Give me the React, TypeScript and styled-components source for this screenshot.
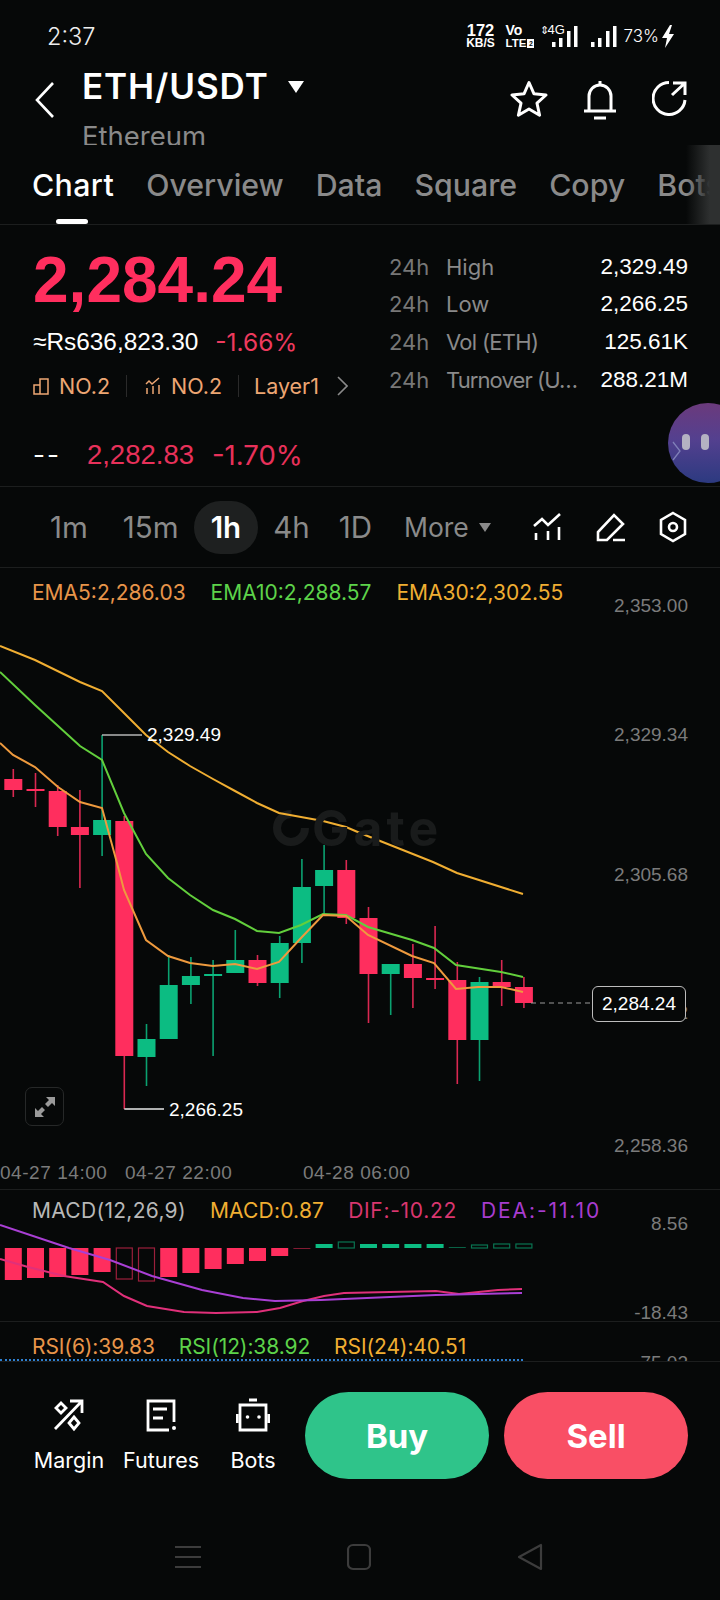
import React from "react";
import styled, { createGlobalStyle } from "styled-components";

const RED = "#ff2e5e";
const GREEN = "#0cbc82";
const EMA5 = "#e8954a";
const EMA10 = "#5dd34a";
const EMA30 = "#f0ae32";

const GlobalStyle = createGlobalStyle`
  html, body {
    margin: 0;
    padding: 0;
    background: #060808;
  }
  * {
    box-sizing: border-box;
  }
`;

// x position of candle number i, shared by price and MACD panes
const slot = (i: number) => 13.3 + 22.2 * i;

// [body top, body bottom, wick top, wick bottom, up]
const candles: [number, number, number, number, boolean][] = [
  [779, 790, 769, 797, false],
  [789, 791, 773, 807, false],
  [791, 827, 785, 836, false],
  [827, 835, 790, 888, false],
  [820, 835, 735, 856, true],
  [821, 1056, 816, 1109, false],
  [1039, 1057, 1024, 1086, true],
  [985, 1039, 955, 1039, true],
  [976, 985, 957, 1004, true],
  [974, 976, 960, 1056, true],
  [960, 973, 930, 973, true],
  [960, 983, 955, 986, false],
  [943, 983, 936, 998, true],
  [887, 943, 859, 963, true],
  [870, 886, 845, 915, true],
  [870, 918, 860, 924, false],
  [918, 974, 907, 1023, false],
  [964, 974, 964, 1015, true],
  [964, 978, 944, 1008, false],
  [978, 980, 926, 989, false],
  [980, 1040, 962, 1084, false],
  [982, 1040, 977, 1081, true],
  [982, 987, 960, 1006, false],
  [987, 1003, 977, 1008, false],
];

const ema30Line =
  "0,646 35,660 80,682 102,691 124,713 146,735 168,752 190,766 213,779 235,791 257,803 279,813 301,817 323,821 346,827 360,833 433,862 457,873 523,894";
const ema10Line =
  "0,672 35,705 80,746 102,760 124,813 146,854 168,878 190,895 213,910 235,919 257,931 279,933 301,925 323,914 346,915 368,927 412,940 434,948 456,965 501,972 523,977";
const ema5Line =
  "0,743 13,755 35,767 58,787 80,802 102,808 117,863 124,890 146,940 168,956 190,963 213,966 235,964 257,969 279,962 301,938 323,915 346,916 368,935 412,956 434,963 456,989 478,987 501,987 523,992";
const deaLine =
  "0,1225 69,1248 110,1260 152,1276 202,1290 243,1298 275,1301 321,1300 367,1298 436,1295 522,1293";
const difLine =
  "0,1259 28,1267 64,1276 103,1282 124,1296 147,1306 184,1312 216,1313 257,1312 280,1308 303,1301 324,1296 344,1293 390,1292 436,1291 459,1294 498,1290 522,1289";

// [top, bottom, hollow]
const macdBars: [number, number, boolean][] = [
  [1248, 1280, false],
  [1248, 1278, false],
  [1248, 1277, false],
  [1248, 1275, false],
  [1248, 1272, false],
  [1248, 1279, true],
  [1248, 1281, true],
  [1248, 1277, false],
  [1248, 1273, false],
  [1248, 1269, false],
  [1248, 1264, false],
  [1248, 1261, false],
  [1248, 1256, false],
  [1248, 1249, false],
  [1244, 1248, false],
  [1242, 1248, true],
  [1244, 1248, false],
  [1244, 1248, false],
  [1244, 1248, false],
  [1244, 1248, false],
  [1247, 1248, false],
  [1245, 1248, true],
  [1244, 1248, true],
  [1244, 1248, true],
];

const stats = [
  { label: "High", value: "2,329.49", spacing: 0 },
  { label: "Low", value: "2,266.25", spacing: 0 },
  { label: "Vol (ETH)", value: "125.61K", spacing: -0.7 },
  { label: "Turnover (U…", value: "288.21M", spacing: -0.9 },
];

const Signal: React.FC = () => (
  <svg width="26" height="21" viewBox="0 0 26 21" fill="#fff">
    <rect x="0" y="16" width="3.500" height="5" />
    <rect x="7" y="12" width="3.500" height="9" />
    <rect x="15" y="5" width="3.500" height="16" />
    <rect x="22" y="0" width="3.500" height="21" />
  </svg>
);

const App: React.FC = () => {
  return (
    <Page>
      <GlobalStyle />
      <StatusBar>
        <Clock>2:37</Clock>
        <StatusIcons>
          <Speed>
            <b>172</b>
            <span>KB/S</span>
          </Speed>
          <Volte>
            <b>Vo</b>
            <span>
              LTE<i>2</i>
            </span>
          </Volte>
          <NetType>
            <small>⇕</small>
            <em>4G</em>
            <Signal />
          </NetType>
          <Signal />
          <Battery>73%</Battery>
          <svg width="14" height="23" viewBox="0 0 14 23" fill="#fff">
            <path d="M9 0 1 13h5l-2 10 9-14H8l3-9z" />
          </svg>
        </StatusIcons>
      </StatusBar>

      <Header>
        <BackIcon width="22" height="36" viewBox="0 0 22 36" fill="none" stroke="#fff" strokeWidth="2.600">
          <path d="M19 1 3 18l16 17" />
        </BackIcon>
        <TitleBlock>
          <TitleRow>
            <Pair>ETH/USDT</Pair>
            <Caret />
          </TitleRow>
          <CoinName>Ethereum</CoinName>
        </TitleBlock>
        <HeaderActions>
          <svg width="38" height="38" viewBox="0 0 38 38" fill="none" stroke="#fff" strokeWidth="3" strokeLinejoin="round">
            <path d="M19 2.500l5 11.300 12 1.200-9 8.200 2.600 12L19 29l-10.600 6.200 2.600-12-9-8.200 12-1.200z" />
          </svg>
          <svg width="34" height="40" viewBox="0 0 34 40" fill="none" stroke="#fff" strokeWidth="3">
            <path d="M6 31V16a11 11 0 0 1 22 0v15" />
            <path d="M1 31h32M11 38h12" />
            <path d="M17 1v4" />
          </svg>
          <svg width="36" height="36" viewBox="0 0 36 36" fill="none" stroke="#fff" strokeWidth="3">
            <path d="M17 2.500A16 16 0 1 0 33 20" />
            <path d="M20 15 33 3M21 3h12v12" />
          </svg>
        </HeaderActions>
      </Header>

      <Tabs>
        <Tab $active>Chart</Tab>
        <Tab>Overview</Tab>
        <Tab>Data</Tab>
        <Tab>Square</Tab>
        <Tab>Copy</Tab>
        <Tab>Bots</Tab>
        <TabsFade />
      </Tabs>

      <Summary>
        <PriceColumn>
          <Price>2,284.24</Price>
          <FiatRow>
            <Fiat>≈Rs636,823.30</Fiat>
            <Change>-1.66%</Change>
          </FiatRow>
          <TagRow>
            <svg width="16" height="18" viewBox="0 0 16 18" fill="none" stroke="#eda673" strokeWidth="1.500">
              <path d="M1 17V8h6v9zM7 17V2h8v15z" />
            </svg>
            <TagText>NO.2</TagText>
            <TagDivider />
            <svg width="16" height="18" viewBox="0 0 16 18" fill="none" stroke="#eda673" strokeWidth="1.500">
              <path d="M1 7l3-3 3 3 7-6M2 11v6M8 9v8M14 8v9" />
            </svg>
            <TagText>NO.2</TagText>
            <TagDivider />
            <LayerText>Layer1</LayerText>
            <TagChevron width="11" height="20" viewBox="0 0 11 20" fill="none" stroke="#8a8a8a" strokeWidth="1.600">
              <path d="M1 1l9 9-9 9" />
            </TagChevron>
          </TagRow>
          <MarkRow>
            <MarkDash>--</MarkDash>
            <MarkPrice>2,282.83</MarkPrice>
            <MarkChange>-1.70%</MarkChange>
          </MarkRow>
        </PriceColumn>
        <StatsColumn>
          {stats.map((s) => (
            <StatRow key={s.label}>
              <StatPeriod>24h</StatPeriod>
              <StatLabel $spacing={s.spacing}>{s.label}</StatLabel>
              <StatValue>{s.value}</StatValue>
            </StatRow>
          ))}
        </StatsColumn>
        <Bubble>
          <BubbleEye />
          <BubbleEye />
          <BubbleChevron width="9" height="20" viewBox="0 0 9 20" fill="none" stroke="#7f7fb8" strokeWidth="1.300">
            <path d="M1 1l7 9-7 9" />
          </BubbleChevron>
        </Bubble>
      </Summary>

      <IntervalBar>
        <Interval>1m</Interval>
        <Interval $nudge={3}>15m</Interval>
        <Interval $active>1h</Interval>
        <Interval>4h</Interval>
        <Interval $nudge={-3}>1D</Interval>
        <MoreInterval>
          More
          <SmallCaret />
        </MoreInterval>
        <ToolIcons>
          <svg width="30" height="28" viewBox="533 513 30 28" fill="none" stroke="#fff" strokeWidth="2.600">
            <path d="M534 526l8-7 6 6 12-11" />
            <path d="M536 533v7M548 531v9M559 527v13" />
          </svg>
          <svg width="30" height="30" viewBox="596 511 30 30" fill="none" stroke="#fff" strokeWidth="2.600">
            <path d="M598 539v-8l16-17 9 9-16 16zM613 539h12" />
          </svg>
          <svg width="28" height="32" viewBox="659 511 28 32" fill="none" stroke="#fff" strokeWidth="2.600">
            <path d="M673 513l12 7v14l-12 7-12-7V520z" />
            <circle cx="673" cy="527" r="4" />
          </svg>
        </ToolIcons>
      </IntervalBar>

      <PriceChart>
        <ChartCanvas width="720" height="621" viewBox="0 568 720 621">
          <circle cx="291" cy="828" r="14" fill="none" stroke="#191b1b" strokeWidth="8" strokeDasharray="66 22" />
          {candles.map(([top, bottom, wTop, wBottom, up], i) => {
            const x = slot(i);
            const c = up ? GREEN : RED;
            return (
              <g key={i}>
                <rect x={x - 0.8} y={wTop} width="1.600" height={wBottom - wTop} fill={c} opacity="0.85" />
                <rect x={x - 9} y={top} width="18" height={bottom - top} fill={c} />
              </g>
            );
          })}
          <path d="M102 735H142" stroke="#b5b5b5" strokeWidth="1.300" fill="none" />
          <path d="M124.300 1109H164" stroke="#e8e8e8" strokeWidth="1.300" fill="none" />
          <polyline points={ema30Line} fill="none" stroke={EMA30} strokeWidth="2" />
          <polyline points={ema10Line} fill="none" stroke="#62cf3c" strokeWidth="2" />
          <polyline points={ema5Line} fill="none" stroke="#ee9a3e" strokeWidth="2" />
          <path d="M531 1003H591" stroke="#9a9a9a" strokeWidth="1.200" strokeDasharray="5 4" />
        </ChartCanvas>
        <Watermark>Gate</Watermark>
        <Legend>
          <LegendItem $color={EMA5}>EMA5:2,286.03</LegendItem>
          <LegendItem $color={EMA10}>EMA10:2,288.57</LegendItem>
          <LegendItem $color={EMA30}>EMA30:2,302.55</LegendItem>
        </Legend>
        <AxisLabel $y={606}>2,353.00</AxisLabel>
        <AxisLabel $y={735}>2,329.34</AxisLabel>
        <AxisLabel $y={875}>2,305.68</AxisLabel>
        <AxisLabel $y={1013}>2,282.02</AxisLabel>
        <AxisLabel $y={1146}>2,258.36</AxisLabel>
        <PeakLabel $x={147} $y={735}>2,329.49</PeakLabel>
        <PeakLabel $x={169} $y={1110}>2,266.25</PeakLabel>
        <LastPrice>2,284.24</LastPrice>
        <ExpandButton>
          <svg width="22" height="22" viewBox="0 0 22 22" fill="#9a9a9a">
            <path d="M12 1h9v9l-3-3-4 4-3-3 4-4zM10 21H1v-9l3 3 4-4 3 3-4 4z" />
          </svg>
        </ExpandButton>
        <TimeLabel $x={0}>04-27 14:00</TimeLabel>
        <TimeLabel $x={125}>04-27 22:00</TimeLabel>
        <TimeLabel $x={303}>04-28 06:00</TimeLabel>
      </PriceChart>

      <MacdPane>
        <ChartCanvas width="720" height="131" viewBox="0 1190 720 131">
          {macdBars.map(([top, bottom, hollow], i) => {
            const x = slot(i);
            const c = i < 14 ? RED : GREEN;
            const thin = bottom - top < 2;
            return hollow ? (
              <rect key={i} x={x - 8} y={top} width="16" height={bottom - top} fill="none" stroke={c} strokeOpacity="0.6" strokeWidth="1.200" />
            ) : (
              <rect key={i} x={x - 8.5} y={top} width="17" height={bottom - top} fill={c} opacity={thin ? 0.5 : 1} />
            );
          })}
          <polyline points={difLine} fill="none" stroke="#e0307a" strokeWidth="2" />
          <polyline points={deaLine} fill="none" stroke="#a93fd4" strokeWidth="2" />
        </ChartCanvas>
        <MacdLegend>
          <LegendItem $color="#b8b8b8" $spacing={0.3}>MACD(12,26,9)</LegendItem>
          <LegendItem $color={EMA30} $spacing={0.2}>MACD:0.87</LegendItem>
          <LegendItem $color="#d9366f" $spacing={0.7}>DIF:-10.22</LegendItem>
          <LegendItem $color="#a83cd0" $spacing={1.9}>DEA:-11.10</LegendItem>
        </MacdLegend>
        <PaneAxis $top={22}>8.56</PaneAxis>
        <PaneAxis $top={111}>-18.43</PaneAxis>
      </MacdPane>

      <RsiPane>
        <RsiLegend>
          <LegendItem $color={EMA5} $spacing={-0.1}>RSI(6):39.83</LegendItem>
          <LegendItem $color={EMA10} $spacing={-0.1}>RSI(12):38.92</LegendItem>
          <LegendItem $color={EMA30} $spacing={-0.1}>RSI(24):40.51</LegendItem>
        </RsiLegend>
        <DottedLine />
        <PaneAxis $top={29}>75.02</PaneAxis>
      </RsiPane>

      <ActionBar>
        <Tool>
          <ToolIcon viewBox="0 0 34 34" fill="none" stroke="#fff" strokeWidth="2.800">
            <path d="M3 31 30 3M18 3h12v12" />
            <path d="M9 5l5 5-5 5-5-5zM22 19l5 6-5 6-5-6z" />
          </ToolIcon>
          <ToolLabel>Margin</ToolLabel>
        </Tool>
        <Tool>
          <ToolIcon viewBox="0 0 34 34" fill="none" stroke="#fff" strokeWidth="2.800">
            <path d="M30 24V3H4v29h21" />
            <path d="M9 11h14M9 20h10" />
            <circle cx="30" cy="30" r="2" fill="#fff" stroke="none" />
          </ToolIcon>
          <ToolLabel>Futures</ToolLabel>
        </Tool>
        <Tool>
          <ToolIcon viewBox="0 0 34 34" fill="none" stroke="#fff" strokeWidth="2.800">
            <path d="M13 2h8M4 7h26v25H4zM1 16v9M33 16v9" />
            <circle cx="11.500" cy="19" r="1.800" fill="#fff" stroke="none" />
            <circle cx="23" cy="19" r="1.800" fill="#fff" stroke="none" />
          </ToolIcon>
          <ToolLabel>Bots</ToolLabel>
        </Tool>
        <TradeButton $color="#2fc48a">Buy</TradeButton>
        <TradeButton $color="#f94f65">Sell</TradeButton>
      </ActionBar>

      <NavBar>
        <svg width="26" height="24" viewBox="0 0 26 24" stroke="#3c3c3c" strokeWidth="2">
          <path d="M0 2h26M0 12h26M0 22h26" />
        </svg>
        <svg width="24" height="28" viewBox="0 0 24 28" fill="none" stroke="#3c3c3c" strokeWidth="2.200">
          <rect x="1" y="2" width="22" height="24" rx="5" />
        </svg>
        <svg width="26" height="28" viewBox="0 0 26 28" fill="none" stroke="#3c3c3c" strokeWidth="2.200" strokeLinejoin="round">
          <path d="M24 2v24L2 14z" />
        </svg>
      </NavBar>
    </Page>
  );
};

export default App;

// Styled components
const FONT = `Inter, "Liberation Sans", sans-serif`;
const NUMERIC = `"Liberation Sans", Arial, sans-serif`;

const Page = styled.div`
  position: relative;
  width: 720px;
  height: 1600px;
  overflow: hidden;
  background: #060808;
  color: #fff;
  font-family: ${FONT};
`;

const StatusBar = styled.div`
  height: 72px;
  padding: 0 45px 0 47px;
  display: flex;
  align-items: center;
  justify-content: space-between;
`;

const Clock = styled.span`
  font-size: 23.5px;
  font-weight: 300;
  color: #eee;
`;

const StatusIcons = styled.div`
  display: flex;
  align-items: center;
  gap: 6px;
`;

const Speed = styled.div`
  width: 28px;
  margin-right: 5px;
  display: flex;
  flex-direction: column;
  align-items: center;
  font-family: ${NUMERIC};
  b {
    font-size: 16.5px;
    line-height: 13px;
    font-weight: 700;
    white-space: nowrap;
  }
  span {
    margin-top: 1px;
    font-size: 12px;
    line-height: 10px;
    font-weight: 700;
    white-space: nowrap;
  }
`;

const Volte = styled(Speed)`
  width: 26px;
  margin-right: 3px;
  align-items: flex-start;
  b {
    font-size: 14px;
  }
  span {
    display: flex;
    align-items: center;
    font-size: 11.5px;
  }
  i {
    margin-left: 1px;
    width: 7px;
    height: 9px;
    background: #fff;
    color: #060808;
    font-size: 7px;
    line-height: 9px;
    font-style: normal;
    text-align: center;
  }
`;

const NetType = styled.div`
  position: relative;
  width: 37px;
  height: 21px;
  margin-right: 7px;
  display: flex;
  justify-content: flex-end;
  small {
    position: absolute;
    left: -1px;
    top: -3px;
    font-size: 11px;
    line-height: 14px;
  }
  em {
    position: absolute;
    left: 7px;
    top: -3px;
    font-style: normal;
    font-family: ${NUMERIC};
    font-size: 13px;
    line-height: 14px;
  }
`;

const Battery = styled.span`
  font-size: 17px;
  font-weight: 300;
  margin-left: 1px;
  margin-right: -4px;
`;

const Header = styled.div`
  height: 73px;
  display: flex;
  overflow: hidden;
  padding-left: 34px;
`;

const BackIcon = styled.svg`
  margin-top: 10px;
  flex: none;
`;

const TitleBlock = styled.div`
  margin-left: 26px;
`;

const TitleRow = styled.div`
  display: flex;
  align-items: center;
  height: 31px;
  margin-top: -1px;
`;

const Pair = styled.span`
  font-size: 35px;
  line-height: 31px;
  font-weight: 600;
  letter-spacing: 0.9px;
`;

const Caret = styled.span`
  width: 0;
  height: 0;
  margin-left: 19px;
  border-left: 8px solid transparent;
  border-right: 8px solid transparent;
  border-top: 12px solid #fff;
`;

const CoinName = styled.div`
  margin-top: 19px;
  font-size: 27.5px;
  line-height: 30px;
  color: #8a8a8a;
`;

const HeaderActions = styled.div`
  margin-left: auto;
  padding: 8px 32px 0 0;
  display: flex;
  align-items: flex-start;
  gap: 35px;
  height: 50px;
`;

const Tabs = styled.div`
  position: relative;
  height: 80px;
  padding: 0 0 0 32px;
  display: flex;
  gap: 32px;
  border-bottom: 1px solid #1c1e1e;
  overflow: hidden;
`;

const Tab = styled.div<{ $active?: boolean }>`
  position: relative;
  padding-top: 25px;
  font-size: 30.3px;
  line-height: 30px;
  font-weight: 500;
  letter-spacing: ${(p) => (p.$active ? "0.4px" : "0")};
  color: ${(p) => (p.$active ? "#fff" : "#8a8a8a")};
  &::after {
    content: "";
    display: ${(p) => (p.$active ? "block" : "none")};
    position: absolute;
    left: 24px;
    bottom: 0;
    width: 32px;
    height: 5px;
    border-radius: 3px;
    background: #fff;
  }
`;

const TabsFade = styled.div`
  position: absolute;
  right: 0;
  top: 0;
  bottom: 0;
  width: 34px;
  background: linear-gradient(90deg, rgba(50, 52, 52, 0), #2e3030 70%);
`;

const Summary = styled.div`
  position: relative;
  height: 262px;
  padding: 23px 32px 0 33px;
  display: flex;
  justify-content: space-between;
  border-bottom: 1px solid #1c1e1e;
`;

const PriceColumn = styled.div`
  display: flex;
  flex-direction: column;
`;

const Price = styled.div`
  font-family: ${NUMERIC};
  font-size: 64px;
  line-height: 64px;
  font-weight: 700;
  color: ${RED};
`;

const FiatRow = styled.div`
  margin-top: 15px;
  display: flex;
  align-items: center;
  gap: 17px;
  line-height: 30px;
`;

const Fiat = styled.span`
  font-family: ${NUMERIC};
  font-size: 24.4px;
  color: #fff;
`;

const Change = styled.span`
  font-size: 24.5px;
  color: #ee3a5e;
`;

const TagRow = styled.div`
  margin-top: 16px;
  height: 26px;
  display: flex;
  align-items: center;
`;

const TagText = styled.span`
  margin-left: 10px;
  font-size: 21.5px;
  color: #eda673;
`;

const LayerText = styled(TagText)`
  margin-left: -3px;
`;

const TagDivider = styled.span`
  width: 1px;
  height: 22px;
  margin: 0 18px 0 16px;
  background: #2a2a2a;
`;

const TagChevron = styled.svg`
  margin-left: 18px;
`;

const MarkRow = styled.div`
  margin-top: 40px;
  display: flex;
  align-items: center;
  gap: 18px;
  line-height: 32px;
`;

const MarkDash = styled.span`
  margin-right: 8px;
  font-size: 26px;
  letter-spacing: 2px;
  color: #fff;
`;

const MarkPrice = styled.span`
  font-family: ${NUMERIC};
  font-size: 27.5px;
  color: #e8315a;
`;

const MarkChange = styled.span`
  font-size: 27.5px;
  color: #e8315a;
`;

const StatsColumn = styled.div`
  width: 299px;
  display: flex;
  flex-direction: column;
`;

const StatRow = styled.div`
  height: 37.6px;
  display: flex;
  align-items: center;
  font-size: 22px;
`;

const StatPeriod = styled.span`
  width: 57px;
  color: #777;
`;

const StatLabel = styled.span<{ $spacing: number }>`
  letter-spacing: ${(p) => p.$spacing}px;
  color: #8a8a8a;
`;

const StatValue = styled.span`
  margin-left: auto;
  font-family: ${NUMERIC};
  font-size: 22.5px;
  color: #fff;
`;

const Bubble = styled.div`
  position: absolute;
  left: 668px;
  top: 178px;
  width: 80px;
  height: 80px;
  border-radius: 50%;
  background: linear-gradient(180deg, #6b3a7c 0%, #54408f 45%, #2c3a80 100%);
  display: flex;
  align-items: flex-start;
  gap: 11px;
  padding: 31px 0 0 14px;
`;

const BubbleEye = styled.span`
  width: 8px;
  height: 16px;
  border-radius: 4px;
  background: #b4b2c2;
`;

const BubbleChevron = styled.svg`
  position: absolute;
  left: 4px;
  top: 38px;
`;

const IntervalBar = styled.div`
  height: 81px;
  padding: 0 33px 0 50px;
  display: flex;
  align-items: center;
  gap: 32px;
  border-bottom: 1px solid #1c1e1e;
`;

const Interval = styled.div<{ $active?: boolean; $nudge?: number }>`
  display: flex;
  align-items: center;
  justify-content: center;
  height: 53px;
  margin-left: ${(p) => p.$nudge ?? 0}px;
  font-size: 29.5px;
  font-weight: ${(p) => (p.$active ? 600 : 400)};
  color: ${(p) => (p.$active ? "#fff" : "#8a8a8a")};
  ${(p) =>
    p.$active &&
    `
    padding: 0 17px;
    margin: 0 -17px;
    border-radius: 27px;
    background: #1e2020;
  `}
`;

const MoreInterval = styled(Interval)`
  font-size: 26.5px;
`;

const SmallCaret = styled.span`
  width: 0;
  height: 0;
  margin-left: 10px;
  border-left: 6.5px solid transparent;
  border-right: 6.5px solid transparent;
  border-top: 9px solid #8a8a8a;
`;

const ToolIcons = styled.div`
  margin-left: auto;
  display: flex;
  align-items: center;
  gap: 33px;
`;

const PriceChart = styled.div`
  position: relative;
  height: 622px;
  border-bottom: 1px solid #1c1e1e;
`;

const ChartCanvas = styled.svg`
  position: absolute;
  left: 0;
  top: 0;
`;

const Watermark = styled.div`
  position: absolute;
  left: 312px;
  top: 232px;
  font-size: 50px;
  line-height: 56px;
  font-weight: 700;
  letter-spacing: 4px;
  color: #191b1b;
`;

const Legend = styled.div`
  position: relative;
  padding: 11px 0 0 32px;
  display: flex;
  gap: 25px;
`;

const MacdLegend = styled(Legend)`
  padding-top: 7px;
  gap: 24px;
`;

const RsiLegend = styled(Legend)`
  gap: 24px;
`;

const LegendItem = styled.span<{ $color: string; $spacing?: number }>`
  font-size: 21px;
  line-height: 28px;
  letter-spacing: ${(p) => p.$spacing ?? 0}px;
  color: ${(p) => p.$color};
`;

const AxisLabel = styled.span<{ $y: number }>`
  position: absolute;
  right: 32px;
  top: ${(p) => p.$y - 568 - 12}px;
  font-family: ${NUMERIC};
  font-size: 19px;
  line-height: 24px;
  color: #7b7b7b;
`;

const PeakLabel = styled.span<{ $x: number; $y: number }>`
  position: absolute;
  left: ${(p) => p.$x}px;
  top: ${(p) => p.$y - 568 - 12}px;
  font-family: ${NUMERIC};
  font-size: 19px;
  line-height: 24px;
  color: #fff;
`;

const LastPrice = styled.div`
  position: absolute;
  left: 592px;
  top: 418px;
  width: 94px;
  height: 36px;
  border: 1px solid #bdbdbd;
  border-radius: 6px;
  background: #060808;
  display: flex;
  align-items: center;
  justify-content: center;
  font-family: ${NUMERIC};
  font-size: 19px;
  color: #fff;
`;

const ExpandButton = styled.div`
  position: absolute;
  left: 25px;
  top: 519px;
  width: 39px;
  height: 39px;
  border: 1.5px solid #262828;
  border-radius: 7px;
  display: flex;
  align-items: center;
  justify-content: center;
`;

const TimeLabel = styled.span<{ $x: number }>`
  position: absolute;
  left: ${(p) => p.$x}px;
  top: 593px;
  font-family: ${NUMERIC};
  font-size: 19px;
  line-height: 24px;
  letter-spacing: 0.55px;
  color: #7b7b7b;
`;

const MacdPane = styled.div`
  position: relative;
  height: 132px;
  border-bottom: 1px solid #1c1e1e;
`;

const PaneAxis = styled.span<{ $top: number }>`
  position: absolute;
  right: 32px;
  top: ${(p) => p.$top}px;
  font-family: ${NUMERIC};
  font-size: 19px;
  line-height: 24px;
  color: #7b7b7b;
`;

const RsiPane = styled.div`
  position: relative;
  height: 40px;
  overflow: hidden;
  border-bottom: 1px solid #1c1e1e;
`;

const DottedLine = styled.div`
  position: absolute;
  left: 0;
  top: 37px;
  width: 523px;
  border-top: 2px dotted #2f80d0;
`;

const ActionBar = styled.div`
  height: 117px;
  padding: 30px 32px 0 23px;
  display: flex;
  align-items: flex-start;
`;

const Tool = styled.div`
  width: 92px;
  padding-top: 6px;
  display: flex;
  flex-direction: column;
  align-items: center;
`;

const ToolIcon = styled.svg`
  width: 34px;
  height: 34px;
`;

const ToolLabel = styled.span`
  margin-top: 15px;
  font-size: 21.5px;
  line-height: 26px;
  color: #fff;
`;

const TradeButton = styled.div<{ $color: string }>`
  flex: 1;
  height: 87px;
  border-radius: 44px;
  background: ${(p) => p.$color};
  display: flex;
  align-items: center;
  justify-content: center;
  font-size: 33px;
  font-weight: 700;
  color: #fff;
  margin-left: 6px;
  & + & {
    margin-left: 15px;
  }
`;

const NavBar = styled.div`
  padding: 64px 177px 0 175px;
  display: flex;
  justify-content: space-between;
  align-items: center;
`;
